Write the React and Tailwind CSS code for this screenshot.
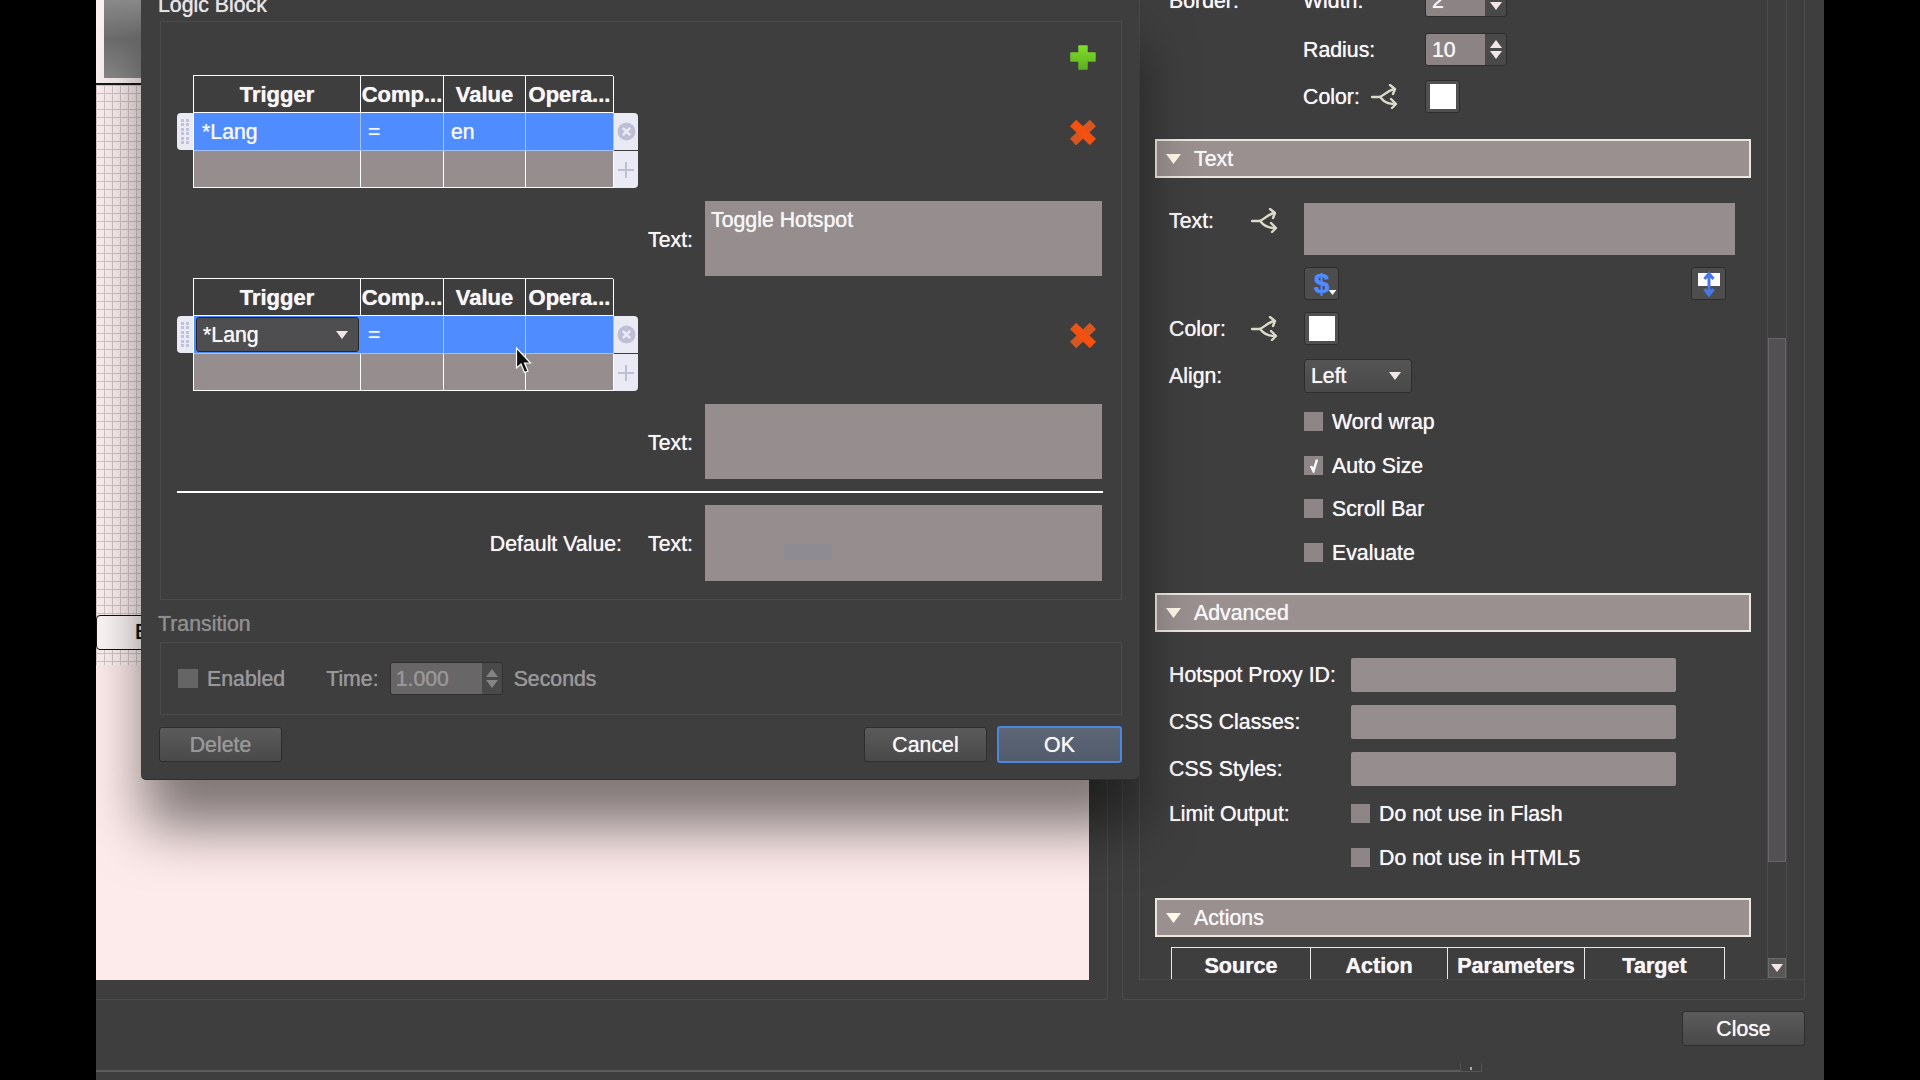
import React from 'react';

const inputBg = 'bg-[#968e8e]';

// text sits a pixel lower than the flex centre in the original
function T({ children, className = '' }) {
  return <span className={`whitespace-nowrap pt-[2px] ${className}`}>{children}</span>;
}

function Caret({ className = '', color = '#f3e6e6', w = 12, h = 8, up = false }) {
  return (
    <svg width={w} height={h} viewBox="0 0 12 8" className={className}>
      <polygon points={up ? '0,8 12,8 6,0' : '0,0 12,0 6,8'} fill={color} />
    </svg>
  );
}

function ShareIcon() {
  return (
    <svg width="27" height="25" viewBox="0 0 27 25" fill="none" stroke="#dcdccb" strokeWidth="2.4" strokeLinecap="round" strokeLinejoin="round">
      <path d="M1 13 H8 C12 13 15 7 23 5" />
      <path d="M19 1 L24 5 L22 10" />
      <path d="M10 14 C13 18 17 20 24 20" />
      <path d="M20 15 L25 20 L21 24" />
    </svg>
  );
}

function GreenPlus() {
  return (
    <svg width="26" height="25" viewBox="0 0 26 25">
      <defs>
        <linearGradient id="plusfill" x1="0" y1="0" x2="0" y2="1">
          <stop offset="0" stopColor="#7fdc2c" />
          <stop offset="1" stopColor="#5cb01f" />
        </linearGradient>
      </defs>
      <path d="M9 1 H17 V8 H25 V16 H17 V24 H9 V16 H1 V8 H9 Z" fill="url(#plusfill)" stroke="url(#plusfill)" strokeWidth="1.5" strokeLinejoin="round" />
    </svg>
  );
}

function RedCross() {
  return (
    <svg width="26" height="25" viewBox="0 0 26 25" fill="none" strokeWidth="9">
      <path d="M23 3 L3 22" stroke="#d9571f" />
      <path d="M3 3 L23 22" stroke="#f4500f" />
    </svg>
  );
}

function Handle() {
  return (
    <div className="flex h-[37px] w-[16px] items-center justify-center rounded-l-[4px] bg-[#eaeaf5]">
      <div className="grid grid-cols-2 gap-x-[2px] gap-y-[1.5px]">
        {[...Array(12)].map((_, i) => (
          <span key={i} className="h-[3px] w-[3px] bg-[#c2c2d8]" />
        ))}
      </div>
    </div>
  );
}

function SideButtons() {
  return (
    <div className="mt-[38px] ml-[1px] flex w-[24px] flex-col gap-[1px]">
      <div className="flex h-[37px] items-center justify-center rounded-tr-[4px] bg-[#eaeaf5]">
        <svg width="19" height="19" viewBox="0 0 18 18">
          <circle cx="9" cy="9" r="8.5" fill="#bebed4" />
          <path d="M5.5 5.5 L12.5 12.5 M12.5 5.5 L5.5 12.5" stroke="#eaeaf5" strokeWidth="2.4" />
        </svg>
      </div>
      <div className="flex h-[37px] items-center justify-center rounded-br-[4px] bg-[#eaeaf5]">
        <svg width="18" height="18" viewBox="0 0 18 18">
          <path d="M9 1 V17 M1 9 H17" stroke="#bebed4" strokeWidth="2" />
        </svg>
      </div>
    </div>
  );
}

function LogicTable({ editing, value }) {
  const head = ['Trigger', 'Comp...', 'Value', 'Opera...'];
  return (
    <div className="relative grid w-[420px] grid-cols-[167px_83px_82px_88px] grid-rows-[37px_38px_37px] border-t border-l border-white">
      {head.map((h) => (
        <div key={h} className="flex items-center justify-center overflow-hidden border-r border-b border-white pb-[2px] text-[22px] font-bold">
          <T>{h}</T>
        </div>
      ))}
      {editing ? (
        <div className="flex items-center border-b border-[#a3c2ff] bg-[#4e8cff] p-[2px]">
          <div className="flex h-[35px] w-full items-center justify-between rounded-[3px] border border-[#26262a] bg-[#4e4d4f] pr-[10px] pl-[6px]">
            <T>*Lang</T>
            <Caret />
          </div>
        </div>
      ) : (
        <div className="flex items-center border-r border-b border-[#a3c2ff] bg-[#4e8cff] pl-[8px]"><T>*Lang</T></div>
      )}
      <div className="flex items-center border-r border-b border-[#a3c2ff] bg-[#4e8cff] pl-[7px]"><T>=</T></div>
      <div className="flex items-center border-r border-b border-[#a3c2ff] bg-[#4e8cff] pl-[7px]"><T>{value}</T></div>
      <div className="border-r border-b border-[#a3c2ff] bg-[#4e8cff]" />
      {[0, 1, 2, 3].map((i) => (
        <div key={i} className={`border-r border-b border-white ${inputBg}`} />
      ))}
      {editing && (
        <svg width="18" height="27" viewBox="0 0 18 27" className="absolute top-[68px] left-[321px]">
          <path d="M1.5 1 V21 L6 17 L9.5 25.5 L13 24 L9.5 16 H15.5 Z" fill="#111" stroke="#fff" strokeWidth="1.2" />
        </svg>
      )}
    </div>
  );
}

function LogicRow({ editing, value, text }) {
  return (
    <div className="flex flex-col">
      <div className="flex items-start justify-between pr-[25px] pl-[16px]">
        <div className="flex items-start">
          <div className="mt-[38px]">
            <Handle />
          </div>
          <LogicTable editing={editing} value={value} />
          <SideButtons />
        </div>
        <div className="mt-[45px]">
          <RedCross />
        </div>
      </div>
      <div className="mt-[13px] flex items-center justify-end pr-[19px]">
        <T className="mt-[2px] mr-[12px]">Text:</T>
        <div className={`h-[75px] w-[397px] px-[6px] pt-[4px] leading-[30px] ${inputBg}`}>{text}</div>
      </div>
    </div>
  );
}

function DialogButton({ children, className = '' }) {
  return (
    <div className={`flex h-[35px] w-[123px] items-center justify-center rounded-[3px] border border-[#2d2d2d] bg-gradient-to-b from-[#5c5b5c] to-[#4a494a] ${className}`}>
      <T>{children}</T>
    </div>
  );
}

function LogicDialog() {
  return (
    <div className="absolute top-[-10px] left-[45px] z-10 w-[998px] rounded-b-[5px] border-b border-[#2f2f2f] bg-[#3f3e3f] pr-[17px] pb-[17px] pl-[19px] shadow-[0_50px_55px_-3px_rgba(0,0,0,0.5)]">
      <div className="-ml-[2px] h-[31px] leading-[30px] text-[#e4e4e4]">Logic Block</div>
      <div className="h-[579px] border border-[#4c4b4c]">
        <div className="flex h-[53px] items-end justify-end pr-[25px] pb-[5px]">
          <GreenPlus />
        </div>
        <LogicRow value="en" text="Toggle Hotspot" />
        <div className="mt-[2px]">
          <LogicRow editing value="" />
        </div>
        <div className="mt-[12px] ml-[16px] h-[2px] w-[926px] bg-white" />
        <div className="mt-[12px] flex items-center justify-end pr-[19px]">
          <T className="mt-[2px] mr-[26px]">Default Value:</T>
          <T className="mt-[2px] mr-[12px]">Text:</T>
          <div className={`relative h-[76px] w-[397px] ${inputBg}`}>
            <div className="absolute top-[39px] left-[79px] h-[16px] w-[48px] bg-[#8f8b92]" />
          </div>
        </div>
      </div>
      <div className="-ml-[2px] h-[42px] pt-[6px] leading-[36px] text-[#8e8e8e]">Transition</div>
      <div className="flex h-[73px] items-center border border-[#4c4b4c] pl-[17px] text-[#989898]">
        <span className="h-[19px] w-[20px] bg-[#666566]" />
        <T className="ml-[9px]">Enabled</T>
        <T className="ml-[41px]">Time:</T>
        <div className="ml-[11px] flex h-[33px] w-[113px] overflow-hidden rounded-[3px] border border-[#2f2f2f]">
          <div className="flex w-[91px] items-center bg-[#686667] pl-[5px]"><T>1.000</T></div>
          <div className="flex flex-1 flex-col items-center justify-center gap-[3px] bg-[#4a494a]">
            <Caret color="#858485" up />
            <Caret color="#858485" />
          </div>
        </div>
        <T className="ml-[11px]">Seconds</T>
      </div>
      <div className="mt-[12px] flex h-[35px] items-center">
        <DialogButton className="-ml-[1px] text-[#989898]">Delete</DialogButton>
        <div className="flex-1" />
        <DialogButton>Cancel</DialogButton>
        <DialogButton className="ml-[10px] h-[37px] w-[125px] !border-2 !border-[#4d86e0] !from-[#5c6676] !to-[#525c6c]">OK</DialogButton>
      </div>
    </div>
  );
}

function Canvas() {
  return (
    <div className="relative flex h-[980px] w-[993px] flex-col bg-[#fdeaea]">
      <div className="flex h-[85px] border-b-2 border-[#1a1a1a] bg-[#fbf1f1] pb-[5px] pl-[8px]">
        <div className="flex-1 bg-gradient-to-b from-[#8a8a8a] via-[#6f6e6e] to-[#8b8a8a]" />
      </div>
      <div className="relative h-[580px] bg-[#fdf0f0] bg-[linear-gradient(#d4c6c8_1px,transparent_1px),linear-gradient(90deg,#d4c6c8_1px,transparent_1px)] bg-[size:8px_8px]">
        <div className="absolute top-[530px] left-0 flex h-[35px] w-[60px] items-center rounded-l-[4px] border border-[#111] bg-[#fdf6f6] pl-[38px] text-[#111]">
          E
        </div>
      </div>
    </div>
  );
}

function SectionHeader({ title, className = '' }) {
  return (
    <div className={`ml-[15px] flex h-[39px] w-[596px] items-center border-2 border-[#ece6e2] bg-[#9a9090] pl-[9px] ${className}`}>
      <Caret color="#fff9e8" w={15} h={12} />
      <T className="ml-[13px]">{title}</T>
    </div>
  );
}

function Stepper({ value, className = '' }) {
  return (
    <div className={`flex h-[33px] w-[82px] overflow-hidden rounded-[3px] border border-[#2d2d2d] ${className}`}>
      <div className="flex w-[59px] items-center bg-[#8c8484] pl-[6px]"><T>{value}</T></div>
      <div className="flex flex-1 flex-col items-center justify-center gap-[3px] bg-[#4a494a]">
        <Caret up />
        <Caret />
      </div>
    </div>
  );
}

function Swatch({ className = '' }) {
  return (
    <div className={`flex h-[33px] w-[35px] items-center justify-center rounded-[3px] border border-[#2d2d2d] bg-[#515051] ${className}`}>
      <div className="h-[25px] w-[26px] bg-white" />
    </div>
  );
}

function CheckRow({ label, checked, className = '' }) {
  return (
    <div className={`flex h-[19px] items-center ${className}`}>
      <div className="flex h-[19px] w-[19px] items-center justify-center bg-[#8e8686]">
        {checked && (
          <svg width="10" height="15" viewBox="0 0 10 15">
            <path d="M2 8 L4.5 13 L8 1.5" fill="none" stroke="#fff" strokeWidth="2.4" />
          </svg>
        )}
      </div>
      <T className="ml-[9px]">{label}</T>
    </div>
  );
}

function FieldRow({ label, className = '' }) {
  return (
    <div className={`ml-[29px] flex h-[34px] items-center ${className}`}>
      <T className="w-[182px]">{label}</T>
      <div className={`h-[34px] w-[325px] rounded-[2px] ${inputBg}`} />
    </div>
  );
}

function PropertiesContent() {
  return (
    <div className="w-[627px] -mt-[16px]">
      <div className="ml-[29px] flex h-[33px] items-center">
        <T className="w-[134px]">Border:</T>
        <T className="w-[122px]">Width:</T>
        <Stepper value="2" />
      </div>
      <div className="mt-[16px] ml-[163px] flex h-[33px] items-center">
        <T className="w-[122px]">Radius:</T>
        <Stepper value="10" />
      </div>
      <div className="mt-[14px] ml-[163px] flex h-[33px] items-center">
        <T className="w-[68px]">Color:</T>
        <ShareIcon />
        <Swatch className="ml-[27px]" />
      </div>

      <SectionHeader title="Text" className="mt-[26px]" />
      <div className="mt-[25px] ml-[29px] flex items-start">
        <T className="mt-[1px] w-[82px] leading-[30px]">Text:</T>
        <div className="mt-[5px] w-[53px]">
          <ShareIcon />
        </div>
        <div className={`h-[52px] w-[431px] ${inputBg}`} />
      </div>
      <div className="mt-[12px] ml-[164px] flex w-[422px] justify-between">
        <div className="relative flex h-[33px] w-[35px] items-center justify-center rounded-[3px] border border-[#2d2d2d] bg-[#4e4d4e] text-[28px] font-bold text-[#4e8cff]">
          $
          <Caret className="absolute right-[1px] bottom-[4px]" color="#fff" w={9} h={5} />
        </div>
        <div className="flex h-[33px] w-[35px] items-center justify-center rounded-[3px] border border-[#2d2d2d] bg-[#4e4d4e]">
          <svg width="26" height="27" viewBox="0 0 26 27">
            <rect x="2" y="3" width="22" height="13" fill="#fff" />
            <path d="M13 4 V24 M8.5 9 L13 3.5 L17.5 9 M8.5 19 L13 25 L17.5 19" fill="none" stroke="#4679e6" strokeWidth="3" />
          </svg>
        </div>
      </div>
      <div className="mt-[12px] ml-[29px] flex h-[33px] items-center">
        <T className="w-[82px]">Color:</T>
        <div className="w-[53px]">
          <ShareIcon />
        </div>
        <Swatch />
      </div>
      <div className="mt-[14px] ml-[29px] flex h-[34px] items-center">
        <T className="w-[135px]">Align:</T>
        <div className="flex h-[34px] w-[108px] items-center justify-between rounded-[3px] border border-[#2d2d2d] bg-gradient-to-b from-[#565556] to-[#4a494a] pr-[10px] pl-[6px]">
          <T>Left</T>
          <Caret />
        </div>
      </div>
      <div className="ml-[164px]">
        <CheckRow label="Word wrap" className="mt-[19px]" />
        <CheckRow label="Auto Size" checked className="mt-[25px]" />
        <CheckRow label="Scroll Bar" className="mt-[24px]" />
        <CheckRow label="Evaluate" className="mt-[25px]" />
      </div>

      <SectionHeader title="Advanced" className="mt-[31px]" />
      <FieldRow label="Hotspot Proxy ID:" className="mt-[26px]" />
      <FieldRow label="CSS Classes:" className="mt-[13px]" />
      <FieldRow label="CSS Styles:" className="mt-[13px]" />
      <div className="mt-[18px] ml-[29px] flex">
        <T className="-mt-[7px] h-[30px] w-[182px] leading-[30px]">Limit Output:</T>
        <div>
          <CheckRow label="Do not use in Flash" />
          <CheckRow label="Do not use in HTML5" className="mt-[25px]" />
        </div>
      </div>

      <SectionHeader title="Actions" className="mt-[31px]" />
      <div className="mt-[10px] ml-[31px] grid h-[40px] w-[554px] grid-cols-[139px_137px_137px_140px] border-l border-t border-[#e8e8e8] text-[21.6px] font-bold">
        {['Source', 'Action', 'Parameters', 'Target'].map((h) => (
          <div key={h} className="flex items-center justify-center border-r border-[#e8e8e8] pb-[6px]">
            <T>{h}</T>
          </div>
        ))}
      </div>
    </div>
  );
}

function ScrollBar() {
  return (
    <div className="flex w-[20px] flex-col border-x border-[#4d4c4d] pt-[338px]">
      <div className="h-[524px] border border-[#666] bg-[#525052]" />
      <div className="flex-1" />
      <div className="mb-[1px] flex h-[20px] items-center justify-center border border-[#6a6a6a] bg-[#585758]">
        <Caret />
      </div>
    </div>
  );
}

export default function App() {
  return (
    <div className="flex h-[1080px] w-[1920px] justify-center overflow-hidden bg-black font-['Liberation_Sans',Arial,sans-serif] text-[21.3px] text-[#f6f6f6] [text-shadow:0_0_0.7px_currentColor]">
      <div className="relative flex h-[1080px] w-[1728px] flex-col bg-[#3f3e3f]">
        <div className="flex h-[1000px]">
          <div className="h-full w-[1012px] rounded-br-[3px] border-r border-b border-[#4c4b4c]">
            <Canvas />
          </div>
          <div className="ml-[14px] h-full w-[683px] rounded-b-[3px] border-x border-b border-[#4c4b4c] pl-[16px]">
            <div className="flex h-[980px] overflow-hidden border-b border-l border-[#4c4b4c]">
              <PropertiesContent />
              <ScrollBar />
            </div>
          </div>
        </div>
        <div className="flex h-[65px] justify-end pt-[11px] pr-[19px]">
          <DialogButton className="w-[122px]">Close</DialogButton>
        </div>
        <div className="flex h-[15px] items-start">
          <div className="mt-[5px] h-[2px] w-[1364px] bg-[#5c5c5c]" />
          <div className="-mt-[2px] flex h-[9px] w-[22px] items-end justify-center border-x border-b border-[#555]">
            <span className="mb-[1px] h-[3px] w-[2px] bg-[#aaa]" />
          </div>
        </div>
        <LogicDialog />
      </div>
    </div>
  );
}
